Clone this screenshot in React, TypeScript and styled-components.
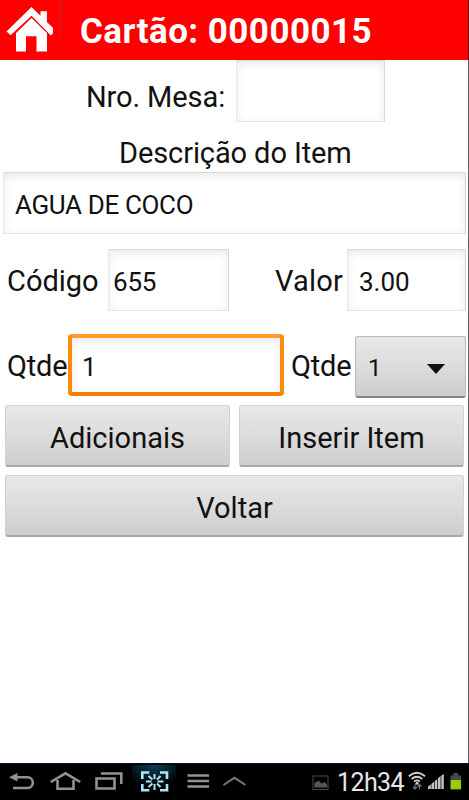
import React from "react";
import styled, { createGlobalStyle } from "styled-components";

const Global = createGlobalStyle`
  * { box-sizing: border-box; }
  body { margin: 0; background: #fff; font-family: Roboto, "Open Sans", sans-serif; color: #111; }
`;

const Screen = styled.div`
  width: 469px;
  height: 800px;
  display: flex;
  flex-direction: column;
  overflow: hidden;
`;

const Page = styled.div`
  height: 763px;
  display: flex;
  flex-direction: column;
  border-right: 1px solid #626262;
`;

const Header = styled.header`
  height: 60px;
  flex: none;
  display: flex;
  background: #ff0000;
  margin-right: -1px;
  border-right: 1px solid #700000;
`;

const HomeButton = styled.div`
  width: 62px;
  height: 56px;
  border-right: 2px solid;
  border-image: linear-gradient(#d21a1a, #e51010 60%, #ff0000) 1;
`;

const Title = styled.h1`
  margin: 0;
  padding-left: 18px;
  font-size: 35px;
  line-height: 64px;
  font-weight: 700;
  letter-spacing: 0.45px;
  color: #fff;
  white-space: nowrap;
`;

const Row = styled.div<{ $h: number; $mt?: number; $pl?: number }>`
  display: flex;
  flex: none;
  height: ${(p) => p.$h}px;
  margin-top: ${(p) => p.$mt ?? 0}px;
  padding-left: ${(p) => p.$pl ?? 0}px;
`;

const Label = styled.label<{ $w: number; $ls?: number; $lh?: number }>`
  flex: none;
  width: ${(p) => p.$w}px;
  font-size: 29px;
  line-height: ${(p) => p.$lh ?? 65}px;
  letter-spacing: ${(p) => p.$ls ?? 0}px;
  white-space: nowrap;
`;

const Field = styled.div<{ $w: number; $pl?: number; $ls?: number }>`
  flex: none;
  width: ${(p) => p.$w}px;
  height: 62px;
  padding-left: ${(p) => p.$pl ?? 0}px;
  border: 1px solid #e6e6e6;
  border-top-color: #dadada;
  border-right-color: #d8d8d8;
  background: #fff;
  box-shadow: inset 0 3px 8px #e9e9e9;
  font-size: 26px;
  line-height: 64px;
  letter-spacing: ${(p) => p.$ls ?? 0}px;
  white-space: nowrap;
`;

const FocusedField = styled(Field)`
  border: 4px solid #ff8a0c;
  border-top-color: #ff9b27;
  border-bottom-color: #f57c08;
  border-radius: 4px;
  line-height: 58px;
`;

const Button = styled.div<{ $w: number; $ls?: number }>`
  flex: none;
  width: ${(p) => p.$w}px;
  height: 62px;
  border: 1px solid #d2d2d2;
  border-bottom: 2px solid #a8a8a8;
  border-radius: 3px;
  background: linear-gradient(#e8e8e8, #dcdcdc 50%, #cdcdcd);
  text-align: center;
  font-size: 29px;
  line-height: 64px;
  letter-spacing: ${(p) => p.$ls ?? 0}px;
  white-space: nowrap;
`;

const Spinner = styled(Button)`
  display: flex;
  justify-content: space-between;
  padding: 0 20px 0 12px;
  border-color: #b8b8b8;
  border-bottom-color: #858585;
  font-size: 24px;
  line-height: 63px;
  svg { margin-top: 27px; }
`;

const SystemBar = styled.footer`
  height: 37px;
  flex: none;
  display: flex;
  background: #000;
  border-top: 1px solid #0b0b35;
  color: #e6e6e6;
`;

const Clock = styled.span`
  width: 71px;
  font-size: 25px;
  line-height: 38px;
  letter-spacing: -0.6px;
  white-space: nowrap;
`;

const HomeIcon = () => (
  <svg width="60" height="56" viewBox="0 0 60 56" fill="#fff">
    <path d="M6.5 31.5 31.5 7 40.5 15.7V11.2h6.4v10.7l6 5.9v5.6l-2 2L31.5 15.8 10.6 35.3z" />
    <path d="M16 33 31.5 18 47 33v18.5H36.5V36.3H26v15.2H16z" />
  </svg>
);

const NavIcons = () => (
  <svg width="312" height="36" viewBox="0 764 312 36" fill="none" stroke="#929292" strokeWidth="2.6">
    <defs>
      <radialGradient id="glow" cx="50%" cy="0%" r="75%">
        <stop offset="0" stopColor="#0d4057" />
        <stop offset="1" stopColor="#000" />
      </radialGradient>
    </defs>
    <path d="M13 788H27.5a5.2 5.2 0 0 0 0-10.7H17" />
    <path d="M9 777.3 17.5 773v8.6z" fill="#929292" stroke="none" />
    <path d="M50.8 782 65.5 773.3 80.2 782M57.5 780v8.7h16V780" />
    <path d="M96.5 778.5h18v10h-18zM101 773.5h20.3v10.5" />
    <rect x="132" y="765" width="44" height="30" fill="url(#glow)" stroke="none" />
    <g stroke="#a9e6f6">
      <path d="M142.3 779v-6.5h7M160 772.5h7v6.5M142.3 784v6.2h7M160 790.2h7V784" />
      <path strokeWidth="2" d="M154.5 774v5M154.5 784v6M146 781.5h5.5M157.5 781.5h6M148.5 776l4 3.5M160.5 776l-3.5 3.5M148.5 787l4-3.5M160.5 787l-3.5-3.5" />
    </g>
    <path d="M187.5 775.5H209M187.5 781H209M187.5 786.6H209" strokeWidth="2.5" />
    <path d="M223.5 785 234.5 777.8 245.5 785" strokeWidth="2" stroke="#777" />
  </svg>
);

const GalleryIcon = () => (
  <svg width="25" height="36" viewBox="312 764 25 36">
    <rect x="313" y="776" width="15" height="13.5" fill="none" stroke="#484848" />
    <path d="M314.5 787.5V783l4-2.5 3 3 3-1.5 2.5 2.5v3z" fill="#555" />
  </svg>
);

const StatusIcons = () => (
  <svg width="61" height="36" viewBox="408 764 61 36" fill="none">
    <g stroke="#d0d0d0" strokeWidth="1.8">
      <path d="M408.8 776.2q8-6.8 16.2 0M411.6 779q5.3-4.4 10.7 0M414 781.6q3-2.4 6 0" />
    </g>
    <circle cx="417" cy="783.2" r="1.5" fill="#ccc" />
    <path d="M415 784v5m-2-2 2 2 2-2M419.5 789.5v-5m-2 2 2-2 2 2" stroke="#777" strokeWidth="1.2" />
    <path d="M428 789v-2.5l2.8-2v4.5zM431.4 789v-5l2.6-2.2v7.2zM434.7 789v-7.8l2.6-2.3V789zM438 789v-10.7l2.6-2.3v13zM441.3 789v-13.5l2.5-1.5v15z" fill="#c2c2c2" />
    <path d="M450.5 775.5h2.8V773h5v2.5h2.8v5.3h-10.6z" fill="#494949" />
    <rect x="450.5" y="780" width="10.6" height="9.4" fill="#99cc00" />
  </svg>
);

export default function App() {
  return (
    <Screen>
      <Global />
      <Page>
        <Header>
          <HomeButton><HomeIcon /></HomeButton>
          <Title>Cartão: 00000015</Title>
        </Header>
        <Row $h={63} $pl={86}>
          <Label $w={150} $lh={75} $ls={-0.1}>Nro. Mesa:</Label>
          <Field $w={149} />
        </Row>
        <Row $h={49} $pl={119}>
          <Label $w={240} $lh={60} $ls={-0.1}>Descrição do Item</Label>
        </Row>
        <Row $h={62} $pl={3}>
          <Field $w={463} $pl={11} $ls={-0.35}>AGUA DE COCO</Field>
        </Row>
        <Row $h={62} $mt={15} $pl={7}>
          <Label $w={101}>Código</Label>
          <Field $w={121} $pl={4} $ls={-0.2}>655</Field>
          <Label as="span" $w={118} $ls={0.2}><Row as="span" $h={62} $pl={46}>Valor</Row></Label>
          <Field $w={119} $pl={11}>3.00</Field>
        </Row>
        <Row $h={63} $mt={23} $pl={7}>
          <Label $w={61} $ls={-0.2}>Qtde</Label>
          <FocusedField $w={216} $pl={10}>1</FocusedField>
          <Label as="span" $w={71} $ls={-0.2}><Row as="span" $h={62} $pl={7}>Qtde</Row></Label>
          <Row $h={63} $mt={2}>
            <Spinner $w={111}>
              <span>1</span>
              <svg width="18" height="10"><path d="M0 0h18L9 10z" fill="#111" /></svg>
            </Spinner>
          </Row>
        </Row>
        <Row $h={62} $mt={8} $pl={5}>
          <Button $w={225}>Adicionais</Button>
          <Row $h={62} $pl={9}><Button $w={225}>Inserir Item</Button></Row>
        </Row>
        <Row $h={62} $mt={8} $pl={5}>
          <Button $w={459}>Voltar</Button>
        </Row>
      </Page>
      <SystemBar>
        <NavIcons />
        <GalleryIcon />
        <Clock>12h34</Clock>
        <StatusIcons />
      </SystemBar>
    </Screen>
  );
}
